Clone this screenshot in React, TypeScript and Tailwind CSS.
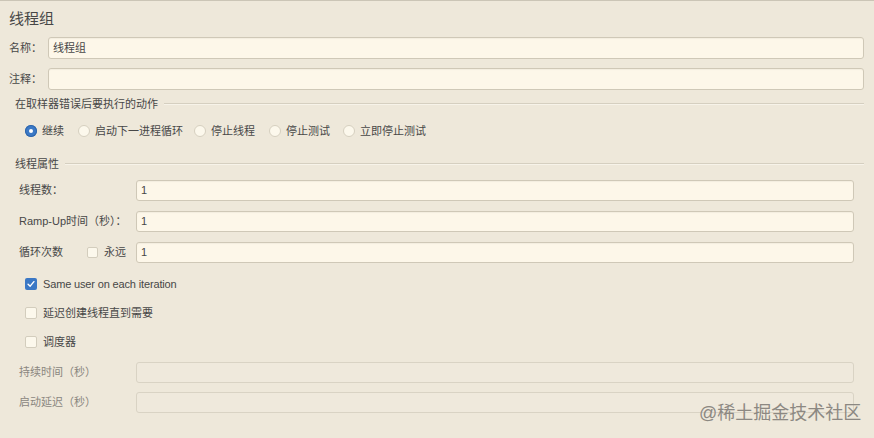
import React from 'react';

const FONT = "font-['Liberation_Sans','Noto_Sans_CJK_SC',sans-serif]";

function Field({ value = '', disabled = false }: { value?: string; disabled?: boolean }) {
	return (
		<div
			className={
				disabled
					? 'h-full flex-1 rounded-[3px] border border-[#d9d3c4] bg-[#efe9dc]'
					: 'flex h-full flex-1 items-center rounded-[3px] border border-[#cfc8b7] bg-[#fdf7e9] px-[4px] text-[11px] shadow-[inset_0_1px_1px_rgba(0,0,0,0.04)]'
			}
		>
			{value}
		</div>
	);
}

function GroupTitle({ title }: { title: string }) {
	return (
		<div className="flex h-[16px] items-center pl-[15px] pr-[10px] text-[11px]">
			<span>{title}</span>
			<div className="ml-[6px] h-[2px] flex-1 border-t border-b border-t-[#d5cfc0] border-b-[#f7f3e9]" />
		</div>
	);
}

function Radio({ checked = false, label, width }: { checked?: boolean; label: string; width: string }) {
	return (
		<div className={`flex items-center gap-[5px] ${width}`}>
			{checked ? (
				<span className="flex h-[12px] w-[12px] items-center justify-center rounded-full bg-[#3b79c6] shadow-[inset_0_0_0_1px_#2f66ab]">
					<span className="h-[4px] w-[4px] rounded-full bg-white" />
				</span>
			) : (
				<span className="h-[12px] w-[12px] rounded-full border border-[#d6d0c0] bg-[#fcf8ec]" />
			)}
			<span className="whitespace-nowrap text-[11px]">{label}</span>
		</div>
	);
}

function Check({ checked = false, size = 'h-[12px] w-[12px]' }: { checked?: boolean; size?: string }) {
	if (checked) {
		return (
			<span className={`flex ${size} items-center justify-center rounded-[2px] bg-[#3b78c5]`}>
				<svg viewBox="0 0 12 12" className="h-[10px] w-[10px]">
					<path d="M2.5 6.3 L5 8.6 L9.5 3.2" fill="none" stroke="white" strokeWidth="1.7" strokeLinecap="round" strokeLinejoin="round" />
				</svg>
			</span>
		);
	}
	return <span className={`${size} rounded-[2px] border border-[#d3cdbd] bg-[#fcf8ec]`} />;
}

export default function App() {
	return (
		<div className={`relative h-[438px] w-[874px] overflow-hidden border-t border-[#cbc5b6] bg-[#eee8da] text-[#474747] ${FONT}`}>
			<div className="pl-[9px] pt-[8px] text-[15px] leading-[20px]">线程组</div>

			<div className="mt-[8px] flex h-[22px] items-center pl-[9px] pr-[10px]">
				<span className="w-[39px] text-[11px]">名称：</span>
				<Field value="线程组" />
			</div>
			<div className="mt-[9px] flex h-[22px] items-center pl-[9px] pr-[10px]">
				<span className="w-[39px] text-[11px]">注释：</span>
				<Field />
			</div>

			<div className="mt-[6px]">
				<GroupTitle title="在取样器错误后要执行的动作" />
			</div>
			<div className="mt-[12px] flex h-[14px] items-center pl-[25px]">
				<Radio checked label="继续" width="w-[53px]" />
				<Radio label="启动下一进程循环" width="w-[116px]" />
				<Radio label="停止线程" width="w-[75px]" />
				<Radio label="停止测试" width="w-[74px]" />
				<Radio label="立即停止测试" width="w-[100px]" />
			</div>

			<div className="mt-[18px]">
				<GroupTitle title="线程属性" />
			</div>

			<div className="mt-[8px] flex h-[21px] items-center pl-[19px] pr-[20px]">
				<span className="w-[117px] text-[11px]">线程数：</span>
				<Field value="1" />
			</div>
			<div className="mt-[10px] flex h-[21px] items-center pl-[19px] pr-[20px]">
				<span className="w-[117px] text-[11px]">Ramp-Up时间（秒）：</span>
				<Field value="1" />
			</div>
			<div className="mt-[10px] flex h-[21px] items-center pl-[19px] pr-[20px]">
				<div className="flex w-[117px] items-center text-[11px]">
					<span className="w-[68px]">循环次数</span>
					<Check size="h-[11px] w-[11px]" />
					<span className="ml-[6px]">永远</span>
				</div>
				<Field value="1" />
			</div>

			<div className="mt-[15px] flex h-[12px] items-center gap-[6px] pl-[25px] text-[11px]">
				<Check checked />
				<span className="tracking-[-0.15px]">Same user on each iteration</span>
			</div>
			<div className="mt-[17px] flex h-[12px] items-center gap-[6px] pl-[25px] text-[11px]">
				<Check />
				<span>延迟创建线程直到需要</span>
			</div>
			<div className="mt-[17px] flex h-[12px] items-center gap-[6px] pl-[25px] text-[11px]">
				<Check />
				<span>调度器</span>
			</div>

			<div className="mt-[14px] flex h-[21px] items-center pl-[19px] pr-[20px]">
				<span className="w-[117px] text-[11px] text-[#8a867e]">持续时间（秒）</span>
				<Field disabled />
			</div>
			<div className="mt-[9px] flex h-[21px] items-center pl-[19px] pr-[20px]">
				<span className="w-[117px] text-[11px] text-[#8a867e]">启动延迟（秒）</span>
				<Field disabled />
			</div>

			<div className="absolute left-[699px] top-[402px] text-[18px] leading-[20px] text-[#8c8882]">@稀土掘金技术社区</div>
		</div>
	);
}
